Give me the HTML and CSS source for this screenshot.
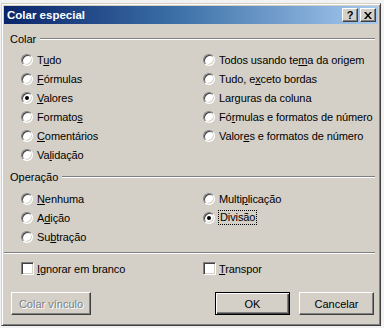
FILE: index.html
```html
<!DOCTYPE html>
<html lang="pt">
<head>
    <meta charset="UTF-8">
    <title>Colar especial</title>
    <link rel="stylesheet" href="styles.css">
</head>
<body>
    <div class="dlg">
        <div class="titlebar">
            <span class="title">Colar especial</span>
            <div class="tbtns">
                <span class="tbtn help">?</span>
                <span class="tbtn">
                    <svg width="8" height="7" viewBox="0 0 8 7"><path d="M0 0h2l2 2.5L6 0h2L5 3.5 8 7H6L4 4.5 2 7H0l3-3.5z" fill="#000"/></svg>
                </span>
            </div>
        </div>

        <div class="ghead"><span>Colar</span><div class="etch"></div></div>
        <div class="opts six">
            <label class="opt"><span class="radio"></span><span>T<u>u</u>do</span></label>
            <label class="opt"><span class="radio"></span><span><u>F</u>órmulas</span></label>
            <label class="opt"><span class="radio on"></span><span><u>V</u>alores</span></label>
            <label class="opt"><span class="radio"></span><span>Formato<u>s</u></span></label>
            <label class="opt"><span class="radio"></span><span><u>C</u>omentários</span></label>
            <label class="opt"><span class="radio"></span><span>Va<u>l</u>idação</span></label>
            <label class="opt"><span class="radio"></span><span>Todos usando te<u>m</u>a da origem</span></label>
            <label class="opt"><span class="radio"></span><span>Tudo, e<u>x</u>ceto bordas</span></label>
            <label class="opt"><span class="radio"></span><span>Lar<u>g</u>uras da coluna</span></label>
            <label class="opt"><span class="radio"></span><span>Fó<u>r</u>mulas e formatos de número</span></label>
            <label class="opt"><span class="radio"></span><span>Valor<u>e</u>s e formatos de número</span></label>
        </div>

        <div class="ghead op"><span>Operação</span><div class="etch"></div></div>
        <div class="opts three">
            <label class="opt"><span class="radio"></span><span><u>N</u>enhuma</span></label>
            <label class="opt"><span class="radio"></span><span>A<u>d</u>ição</span></label>
            <label class="opt"><span class="radio"></span><span>Su<u>b</u>tração</span></label>
            <label class="opt"><span class="radio"></span><span>Multi<u>p</u>licação</span></label>
            <label class="opt"><span class="radio on"></span><span class="focus">Divisão</span></label>
        </div>

        <div class="etch sep"></div>

        <div class="opts one">
            <label class="opt chk"><span class="box"></span><span><u>I</u>gnorar em branco</span></label>
            <label class="opt chk"><span class="box"></span><span><u>T</u>ranspor</span></label>
        </div>

        <div class="btns">
            <button class="btn link" disabled>Colar vínculo</button>
            <button class="btn def">OK</button>
            <button class="btn">Cancelar</button>
        </div>
    </div>
</body>
</html>
```

FILE: styles.css
```css
body{
    margin: 0;
    background-color: #f2f2f2;
    font-family: "Liberation Sans", Arial, sans-serif;
    font-size: 11px;
    color: #000;
}

.dlg{
    margin: 3px 0 0 1px;
    width: 380px;
    height: 323px;
    box-sizing: border-box;
    background-color: #d4d0c8;
    border: 1px solid;
    border-color: #d4d0c8 #404040 #404040 #d4d0c8;
    box-shadow: inset 1px 1px #fff, inset -1px -1px #808080;
    padding: 2px;
}

.titlebar{
    height: 18px;
    display: flex;
    align-items: center;
    justify-content: space-between;
    background: linear-gradient(90deg, #0a246a 0%, #3a6ea5 45%, #a6caf0 100%);
    padding: 0 2px 0 3px;
}
.title{
    color: #fff;
    font-weight: bold;
    font-size: 11.5px;
}
.tbtns{
    display: flex;
    gap: 2px;
}
.tbtn{
    width: 16px;
    height: 14px;
    box-sizing: border-box;
    display: flex;
    align-items: center;
    justify-content: center;
    background-color: #d4d0c8;
    border: 1px solid;
    border-color: #fff #404040 #404040 #fff;
    box-shadow: inset -1px -1px #808080;
}
.help{
    font-weight: bold;
    font-size: 11px;
    line-height: 1;
}

.ghead{
    display: flex;
    align-items: center;
    gap: 4px;
    height: 13px;
    margin: 8px 3px 0 6px;
}
.ghead.op{
    margin-top: 6px;
}
.etch{
    flex: 1;
    height: 0;
    border-top: 1px solid #808080;
    border-bottom: 1px solid #fff;
}

.opts{
    display: grid;
    grid-template-columns: 182px 1fr;
    grid-auto-flow: column;
    padding-left: 17px;
    margin-top: 5px;
}
.six{
    grid-template-rows: repeat(6, 19px);
}
.three{
    grid-template-rows: repeat(3, 19px);
    margin-top: 6px;
}
.one{
    grid-template-rows: 19px;
}

.opt{
    display: flex;
    align-items: center;
    gap: 4px;
    white-space: nowrap;
    letter-spacing: -0.1px;
}
.opt.chk{
    gap: 3px;
}

.radio{
    position: relative;
    flex: none;
    width: 12px;
    height: 12px;
    box-sizing: border-box;
    border-radius: 50%;
    background-color: #fff;
    border: 1px solid;
    border-color: #808080 #fff #fff #808080;
    box-shadow: inset 1px 1px #404040, inset -1px -1px #d4d0c8;
}
.radio.on::after{
    content: "";
    position: absolute;
    left: 3px;
    top: 3px;
    width: 4px;
    height: 4px;
    border-radius: 50%;
    background-color: #000;
}

.box{
    flex: none;
    width: 13px;
    height: 13px;
    box-sizing: border-box;
    background-color: #fff;
    border: 1px solid;
    border-color: #808080 #fff #fff #808080;
    box-shadow: inset 1px 1px #404040, inset -1px -1px #d4d0c8;
}

.focus{
    outline: 1px dotted #000;
    outline-offset: 0;
    padding: 0 1px;
    line-height: 13px;
}

.sep{
    flex: none;
    margin: 6px 3px 0 0;
}
.etch.sep + .opts{
    margin-top: 5px;
}

.btns{
    display: flex;
    margin: 14px 4px 0 7px;
}
.btn{
    height: 23px;
    width: 75px;
    box-sizing: border-box;
    font-family: "Liberation Sans", Arial, sans-serif;
    font-size: 11px;
    color: #000;
    background-color: #d4d0c8;
    border: 1px solid;
    border-color: #fff #404040 #404040 #fff;
    box-shadow: inset -1px -1px #808080;
    padding: 0;
}
.link{
    width: 80px;
    color: #808080;
    text-shadow: 1px 1px #fff;
    margin-right: auto;
}
.def{
    border-color: #000;
    box-shadow: inset 1px 1px #fff, inset -1px -1px #404040, inset -2px -2px #808080;
    margin-right: 9px;
}
```
